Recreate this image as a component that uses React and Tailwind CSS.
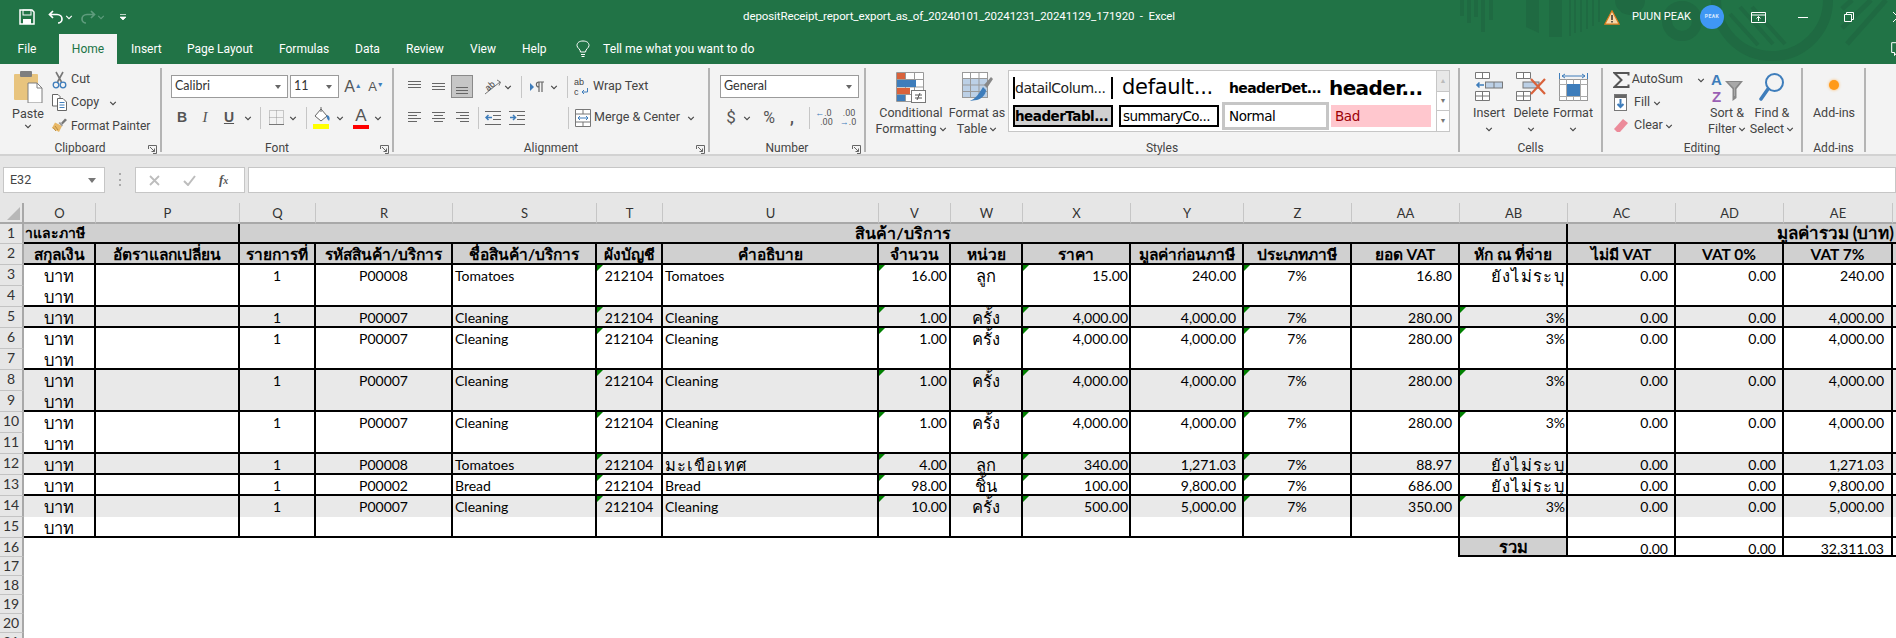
import React from "react";

const ui = "font-['Roboto',sans-serif]";
const xl = "font-['Lato','Noto_Sans',sans-serif]";

function Chev({ c = "#444", s = 8 }) {
  return (
    <svg width={s} height={s} viewBox="0 0 8 8" className="shrink-0">
      <path d="M1.2 2.8 L4 5.6 L6.8 2.8" fill="none" stroke={c} strokeWidth="1.1" />
    </svg>
  );
}
function Launcher() {
  return (
    <svg width="9" height="9" viewBox="0 0 9 9" className="absolute right-[3px] bottom-[-2px]">
      <path d="M.5 4V.5H8.5V8.5H5" fill="none" stroke="#666" />
      <path d="M2 2L6.5 6.5M6.5 3.5V6.5H3.5" fill="none" stroke="#666" />
    </svg>
  );
}
function Sep({ h = "h-[22px]", ml = "" }) {
  return <div className={`w-px bg-[#c6c6c6] ${h} ${ml}`} />;
}

/* ---------- icons ---------- */
const Lines = ({ rows }) => (
  <svg width="16" height="16" viewBox="0 0 16 16">
    {rows.map(([y, a, b], i) => (
      <rect key={i} x={a} y={y} width={b - a} height="1" fill="#666" />
    ))}
  </svg>
);
const PasteIcon = () => (
  <svg width="29" height="32" viewBox="0 0 29 32">
    <rect x="0" y="3" width="24" height="26" rx="1" fill="#e8c47e" />
    <rect x="6" y="0" width="12" height="6" rx="1" fill="#7f7f7f" />
    <path d="M14 12H23L28 17V32H14Z" fill="#fff" stroke="#7f7f7f" />
    <path d="M23 12V17H28" fill="none" stroke="#7f7f7f" />
  </svg>
);
const CutIcon = () => (
  <svg width="15" height="18" viewBox="0 0 15 18">
    <path d="M4 1L9.5 11M11 1L5.5 11" stroke="#777" strokeWidth="1.6" />
    <circle cx="4" cy="14" r="2.8" fill="none" stroke="#3e7dbb" strokeWidth="1.3" />
    <circle cx="11" cy="14" r="2.8" fill="none" stroke="#3e7dbb" strokeWidth="1.3" />
  </svg>
);
const CopyIcon = () => (
  <svg width="15" height="17" viewBox="0 0 15 17">
    <path d="M.5.5H6L8 2.5V12H.5Z" fill="#fff" stroke="#666" />
    <path d="M5.5 4.5H11L14.5 8V16.5H5.5Z" fill="#fff" stroke="#666" />
    <path d="M7.5 8.5H12.5M7.5 11H12.5M7.5 13.5H12.5" stroke="#3e7dbb" />
  </svg>
);
const PainterIcon = () => (
  <svg width="17" height="17" viewBox="0 0 17 17">
    <path d="M10 6L14 1.5L16 3L11.5 7.5Z" fill="#777" />
    <path d="M4 5.5L11 9L8 15L1 11Z" fill="#e8b867" />
    <path d="M9 5L12 8L11 9.5L7.5 6Z" fill="#999" />
    <path d="M4 9L7 13M2 10.5L5 14" stroke="#b98a3c" />
  </svg>
);
const Bucket = () => (
  <svg width="20" height="24" viewBox="0 0 20 24">
    <path d="M3 10L9 3L15 10L9 15Z" fill="#fff" stroke="#666" />
    <path d="M9 1V6" stroke="#666" />
    <path d="M15 9C18 10 18 13 17 15C15 13 14 11 15 9Z" fill="#3e7dbb" />
    <rect x="1" y="18" width="16" height="5" fill="#ffff00" />
  </svg>
);
const FontColor = () => (
  <span className="flex flex-col items-center leading-none">
    <span className="font-['Liberation_Sans',sans-serif] text-[17px] leading-[17px] text-[#555]">A</span>
    <span className="mt-[1px] block h-[4px] w-[16px] bg-[#ff0000]" />
  </span>
);
const BordersIcon = () => (
  <svg width="15" height="15" viewBox="0 0 15 15">
    <path d="M.5.5H14.5V14.5H.5ZM7.5.5V14.5M.5 7.5H14.5" fill="none" stroke="#999" strokeDasharray="1 1" />
    <path d="M0 14.5H15" stroke="#777" />
  </svg>
);
const Orient = () => (
  <svg width="18" height="18" viewBox="0 0 18 18">
    <path d="M1 16L16 4" stroke="#777" />
    <path d="M13 2L16.5 4L15 7.5" fill="none" stroke="#777" />
    <text x="1" y="11" fontSize="9" fill="#444" transform="rotate(-40 6 8)">ab</text>
  </svg>
);
const Rtl = () => (
  <svg width="16" height="14" viewBox="0 0 16 14">
    <path d="M1 3V11L5 7Z" fill="#3e7dbb" />
    <path d="M9 2H15M10 2V12M13 2V12M10 2C6.5 2 6.5 7 10 7" fill="none" stroke="#666" strokeWidth="1.2" />
  </svg>
);
const Indent = ({ flip }) => (
  <svg width="16" height="16" viewBox="0 0 16 16">
    <path d="M0 1.5H16M8 5.5H16M8 9.5H16M0 14.5H16" stroke="#666" />
    {flip ? (
      <path d="M7 7.5H1M3.5 5L1 7.5L3.5 10" fill="none" stroke="#3e7dbb" strokeWidth="1.5" />
    ) : (
      <path d="M1 7.5H6.5M4 5L6.5 7.5L4 10" fill="none" stroke="#3e7dbb" strokeWidth="1.5" />
    )}
  </svg>
);
const WrapIcon = () => (
  <svg width="16" height="20" viewBox="0 0 16 20">
    <path d="M13.5 11V15H8M10 13L8 15L10 17" fill="none" stroke="#3e7dbb" />
    <text x="0" y="8" fontSize="9" fill="#444" fontFamily="Liberation Sans">ab</text>
    <text x="0" y="18" fontSize="9" fill="#444" fontFamily="Liberation Sans">c</text>
  </svg>
);
const MergeIcon = () => (
  <svg width="16" height="18" viewBox="0 0 16 18">
    <path d="M.5.5H15.5V17.5H.5ZM.5 5H15.5M.5 13H15.5M8 .5V5M8 13V17.5" fill="#fff" stroke="#777" />
    <path d="M3 9H13M5 7L3 9L5 11M11 7L13 9L11 11" fill="none" stroke="#3e7dbb" />
  </svg>
);
const CondIcon = () => (
  <svg width="30" height="31" viewBox="0 0 30 31">
    <path d="M.5.5H27.5V29.5H.5ZM9.5.5V29.5M18.5.5V22M.5 7.5H27.5M.5 15H27.5M.5 22.5H18" fill="#fff" stroke="#999" />
    <rect x="1" y="1" width="8" height="6" fill="#d9623b" />
    <rect x="1" y="8" width="19" height="7" fill="#3e7dbb" />
    <rect x="1" y="16" width="13" height="6" fill="#d9623b" />
    <rect x="1" y="23" width="8" height="6" fill="#3e7dbb" />
    <rect x="15.5" y="18.5" width="14" height="12" fill="#fff" stroke="#777" />
    <path d="M19 23H26M19 26H26M24 21L21 28" stroke="#555" />
  </svg>
);
const TableIcon = () => (
  <svg width="31" height="31" viewBox="0 0 31 31">
    <rect x=".5" y=".5" width="25" height="25" fill="#fff" stroke="#999" />
    <rect x="1" y="6" width="24" height="19" fill="#bcd0e6" />
    <path d="M8.5.5V25.5M17 .5V25.5M.5 6.5H25.5M.5 13H25.5M.5 19.5H25.5" stroke="#999" />
    <path d="M22 13L29 5L31 7L25 16Z" fill="#888" />
    <path d="M21 15L24 18C24 23 19 27 15 28C8 29 8 29 8 29C13 27 17 22 21 15Z" fill="#3e7dbb" />
  </svg>
);
const InsertIcon = () => (
  <svg width="28" height="29" viewBox="0 0 28 29">
    <path d="M.5.5H14.5V6.5H.5ZM7.5.5V6.5" fill="#fff" stroke="#777" />
    <rect x="10.5" y="10" width="17" height="6" fill="#bcd0e6" stroke="#777" />
    <path d="M19 10V16" stroke="#777" />
    <path d="M9 13H2M4.5 10.5L2 13L4.5 15.5" fill="none" stroke="#3e7dbb" strokeWidth="1.6" />
    <path d="M.5 19.5H14.5V28.5H.5ZM7.5 19.5V28.5M.5 24H14.5" fill="#fff" stroke="#777" />
  </svg>
);
const DeleteIcon = () => (
  <svg width="31" height="29" viewBox="0 0 31 29">
    <path d="M.5.5H14.5V6.5H.5ZM7.5.5V6.5" fill="#fff" stroke="#777" />
    <rect x="7" y="10" width="16" height="6" fill="#bcd0e6" stroke="#777" />
    <path d="M.5 19.5H14.5V28.5H.5ZM7.5 19.5V28.5M.5 24H14.5" fill="#fff" stroke="#777" />
    <path d="M15 7L29 22M29 7L15 22" stroke="#d9623b" strokeWidth="2.2" />
  </svg>
);
const FormatIcon = () => (
  <svg width="29" height="31" viewBox="0 0 29 31">
    <path d="M3 4H26M3 4L6 2M3 4L6 6M26 4L23 2M26 4L23 6M.5 1V7M28.5 1V7" fill="none" stroke="#3e7dbb" />
    <rect x=".5" y="7.5" width="28" height="21" fill="#fff" stroke="#999" />
    <path d="M7.5 7.5V28.5M21.5 7.5V28.5M14.5 7.5V28.5M.5 12.5H28.5M.5 24.5H28.5" stroke="#aaa" />
    <rect x="8" y="12" width="13" height="12" fill="#3e7dbb" />
  </svg>
);
const Sigma = () => (
  <svg width="17" height="16" viewBox="0 0 17 16">
    <path d="M15.5 3.5V1H1.5L8.5 8L1.5 15H15.5V12.5" fill="none" stroke="#555" strokeWidth="2" />
  </svg>
);
const FillIcon = () => (
  <svg width="13" height="17" viewBox="0 0 13 17">
    <rect x=".5" y=".5" width="12" height="16" fill="#fff" stroke="#777" />
    <rect x="1" y="1" width="11" height="3" fill="#666" />
    <path d="M6.5 5V13M3.5 10L6.5 13L9.5 10" fill="none" stroke="#3e7dbb" strokeWidth="2" />
  </svg>
);
const Eraser = () => (
  <svg width="14" height="14" viewBox="0 0 14 14">
    <path d="M9 0L14 4L6 13H3L0 10Z" fill="#ec8b9a" />
  </svg>
);
const SortIcon = () => (
  <svg width="32" height="31" viewBox="0 0 32 31">
    <text x="0" y="13" fontSize="15" fontWeight="700" fill="#3e7dbb" fontFamily="Liberation Sans">A</text>
    <text x="1" y="30" fontSize="15" fontWeight="700" fill="#9a5fb4" fontFamily="Liberation Sans">Z</text>
    <path d="M14 9H32L25.5 17V26L21.5 29V17Z" fill="#888" />
    <path d="M17 10H29L24 16V24H23V16Z" fill="#a9a9a9" />
  </svg>
);
const FindIcon = () => (
  <svg width="26" height="30" viewBox="0 0 26 30">
    <circle cx="15.5" cy="10.5" r="8.5" fill="none" stroke="#3e7dbb" strokeWidth="2" />
    <path d="M9 17L2 27" stroke="#3e7dbb" strokeWidth="3.5" strokeLinecap="round" />
  </svg>
);
const Warn = () => (
  <svg width="16" height="15" viewBox="0 0 16 15">
    <path d="M8 .8L15.2 14.2H.8Z" fill="#f6d8a8" stroke="#d97b1c" strokeWidth="1.2" />
    <path d="M8 5V10M8 11V12.6" stroke="#222" strokeWidth="1.4" />
  </svg>
);

/* ---------- ribbon parts ---------- */
function Group({ w, label, launcher, children }) {
  return (
    <div className={`relative mt-[4px] flex h-[84px] shrink-0 flex-col border-r-2 border-[#b4b4b4] ${w}`}>
      <div className="h-[73px] shrink-0">{children}</div>
      <div className={`h-[14px] shrink-0 text-center text-[12px] leading-[14px] text-[#444] ${ui}`}>{label}</div>
      {launcher && <Launcher />}
    </div>
  );
}
function Big({ w, icon, l1, l2, chev, ml = "" }) {
  return (
    <div className={`flex shrink-0 flex-col items-center ${w} ${ml}`}>
      <div className="flex h-[34px] items-start justify-center pt-[4px]">{icon}</div>
      <div className="mt-[3px] whitespace-nowrap text-[12.5px] leading-[16px] text-[#444]">{l1}</div>
      <div className="flex h-[16px] items-center gap-[2px] whitespace-nowrap text-[12.5px] leading-[16px] text-[#444]">
        {l2}
        {chev && <Chev />}
      </div>
    </div>
  );
}
const Slot = ({ w = "w-[22px]", ml = "", on, children }) => (
  <div
    className={`flex h-[23px] shrink-0 items-center justify-center ${w} ${ml} ${on ? "border border-[#8a8a8a] bg-[#c6c6c6]" : ""}`}
  >
    {children}
  </div>
);
const Combo = ({ w, ml = "", label }) => (
  <div className={`flex h-[23px] shrink-0 items-center justify-between border border-[#9b9b9b] bg-white pl-[3px] pr-[6px] text-[12.5px] text-[#333] ${w} ${ml}`}>
    <span className={xl}>{label}</span>
    <span className="h-0 w-0 border-x-[3.5px] border-t-[4px] border-x-transparent border-t-[#666]" />
  </div>
);

function Ribbon() {
  return (
    <div className={`flex h-[92px] shrink-0 border-b-2 border-[#d2d2d2] bg-[#f3f3f3] ${ui}`}>
      <Group w="w-[162px]" label="Clipboard" launcher>
        <div className="flex">
          <div className="ml-[13px] flex w-[30px] flex-col items-center text-[12.5px] leading-[16px] text-[#444]">
            <div className="mt-[3px] h-[33px]"><PasteIcon /></div>
            <div className="mt-[2px]">Paste</div>
            <Chev />
          </div>
          <div className="ml-[7px] flex flex-col text-[12.5px] text-[#444]">
            <div className="flex h-[23px] items-center"><span className="flex w-[19px] justify-center"><CutIcon /></span><span className="ml-[2px]">Cut</span></div>
            <div className="flex h-[23px] items-center"><span className="flex w-[19px] justify-center"><CopyIcon /></span><span className="ml-[2px]">Copy</span><span className="ml-[10px]"><Chev /></span></div>
            <div className="flex h-[23px] items-center"><span className="flex w-[19px] justify-center"><PainterIcon /></span><span className="ml-[2px] text-[12px]">Format Painter</span></div>
          </div>
        </div>
      </Group>

      <Group w="w-[232px]" label="Font" launcher>
        <div className="ml-[9px] mt-[7px] flex">
          <Combo w="w-[117px]" label="Calibri" />
          <Combo w="w-[49px]" ml="ml-[2px]" label="11" />
          <Slot ml="ml-[3px]"><span className="font-['Liberation_Sans',sans-serif] text-[16px] text-[#555]">A<sup className="text-[7px] text-[#3e7dbb]">▲</sup></span></Slot>
          <Slot ml="ml-[1px]"><span className="font-['Liberation_Sans',sans-serif] text-[13px] text-[#555]">A<sup className="text-[7px] text-[#3e7dbb]">▼</sup></span></Slot>
        </div>
        <div className="ml-[9px] mt-[8px] flex items-center text-[#555]">
          <Slot><span className="font-['Liberation_Sans',sans-serif] text-[14px] font-bold">B</span></Slot>
          <Slot ml="ml-[1px]"><span className="font-['Liberation_Serif',serif] text-[15px] italic">I</span></Slot>
          <Slot ml="ml-[2px]"><span className="font-['Liberation_Sans',sans-serif] text-[14px] font-bold underline">U</span></Slot>
          <Slot w="w-[10px]" ml="ml-[3px]"><Chev /></Slot>
          <Sep ml="ml-[7px]" />
          <Slot ml="ml-[4px]"><BordersIcon /></Slot>
          <Slot w="w-[10px]" ml="ml-[1px]"><Chev /></Slot>
          <Sep ml="ml-[8px]" />
          <Slot ml="ml-[4px]"><Bucket /></Slot>
          <Slot w="w-[10px]" ml="ml-[2px]"><Chev /></Slot>
          <Slot ml="ml-[5px]"><FontColor /></Slot>
          <Slot w="w-[10px]" ml="ml-[1px]"><Chev /></Slot>
        </div>
      </Group>

      <Group w="w-[316px]" label="Alignment" launcher>
        <div className="ml-[9px] mt-[7px] flex items-center">
          <Slot><Lines rows={[[2, 2, 15], [5, 2, 15], [8, 2, 15]]} /></Slot>
          <Slot ml="ml-[2px]"><Lines rows={[[4, 2, 15], [7, 2, 15], [10, 2, 15]]} /></Slot>
          <Slot ml="ml-[2px]" on><Lines rows={[[8, 2, 14], [11, 2, 14], [14, 2, 14]]} /></Slot>
          <Slot ml="ml-[9px]"><Orient /></Slot>
          <Slot w="w-[10px]" ml="ml-[-1px]"><Chev /></Slot>
          <Sep ml="ml-[8px]" />
          <Slot ml="ml-[4px]"><Rtl /></Slot>
          <Slot w="w-[10px]" ml="ml-[1px]"><Chev /></Slot>
          <Sep ml="ml-[8px]" />
          <Slot w="w-[20px]" ml="ml-[4px]"><WrapIcon /></Slot>
          <span className="ml-[1px] whitespace-nowrap text-[12.5px] text-[#444]">Wrap Text</span>
        </div>
        <div className="ml-[9px] mt-[8px] flex items-center">
          <Slot><Lines rows={[[2, 2, 15], [5, 2, 11], [8, 2, 15], [11, 2, 11]]} /></Slot>
          <Slot ml="ml-[2px]"><Lines rows={[[2, 2, 15], [5, 4, 13], [8, 2, 15], [11, 4, 13]]} /></Slot>
          <Slot ml="ml-[2px]"><Lines rows={[[2, 2, 15], [5, 6, 15], [8, 2, 15], [11, 6, 15]]} /></Slot>
          <Sep ml="ml-[5px]" />
          <Slot ml="ml-[3px]"><Indent flip /></Slot>
          <Slot ml="ml-[2px]"><Indent /></Slot>
          <Sep ml="ml-[40px]" />
          <Slot w="w-[20px]" ml="ml-[4px]"><MergeIcon /></Slot>
          <span className="ml-[1px] w-[88px] whitespace-nowrap text-[12.5px] text-[#444]">Merge &amp; Center</span>
          <span className="ml-[5px]"><Chev /></span>
        </div>
      </Group>

      <Group w="w-[156px]" label="Number" launcher>
        <div className="ml-[10px] mt-[7px]"><Combo w="w-[139px]" label="General" /></div>
        <div className="ml-[10px] mt-[8px] flex items-center text-[#555]">
          <Slot><span className="text-[17px]">$</span></Slot>
          <Slot w="w-[10px]"><Chev /></Slot>
          <Slot ml="ml-[6px]"><span className="text-[16px]">%</span></Slot>
          <Slot ml="ml-[1px]"><span className="text-[16px] font-bold leading-[8px]">,</span></Slot>
          <Sep ml="ml-[6px]" />
          <Slot ml="ml-[3px]"><span className="flex flex-col text-[9px] leading-[9px]"><span><b className="text-[#3e7dbb]">←</b>.0</span><span className="ml-[5px]">.00</span></span></Slot>
          <Slot ml="ml-[2px]"><span className="flex flex-col text-[9px] leading-[9px]"><span className="ml-[3px]">.00</span><span><b className="text-[#3e7dbb]">→</b>.0</span></span></Slot>
        </div>
      </Group>

      <Group w="w-[594px]" label="Styles">
        <div className="flex">
          <Big w="w-[70px]" ml="ml-[10px]" icon={<CondIcon />} l1="Conditional" l2="Formatting" chev />
          <Big w="w-[60px]" ml="ml-[1px]" icon={<TableIcon />} l1="Format as" l2="Table" chev />
          <div className="ml-[1px] mt-[2px] flex h-[62px] w-[442px] border border-[#c6c6c6] bg-white">
            <div className="flex w-[428px] flex-col pl-[4px]">
              <div className="flex h-[34px] items-center text-black">
                <div className="h-[22px] w-[100px] overflow-hidden whitespace-nowrap border-x-2 border-black font-['DejaVu_Sans',sans-serif] text-[14px] leading-[22px] tracking-[-0.5px] text-[#222]">datailColum...</div>
                <div className="ml-[9px] w-[100px] font-['DejaVu_Sans',sans-serif] text-[21px] tracking-[-0.3px]">default...</div>
                <div className="ml-[7px] w-[90px] font-['DejaVu_Sans',sans-serif] text-[14px] font-bold tracking-[-0.6px]">headerDet...</div>
                <div className="ml-[10px] font-['DejaVu_Sans',sans-serif] text-[20px] font-bold tracking-[-0.6px]">header...</div>
              </div>
              <div className="flex h-[22px] items-center text-[14px]">
                <div className="h-[22px] w-[100px] overflow-hidden whitespace-nowrap border-2 border-black bg-[#d0d0d0] font-['DejaVu_Sans',sans-serif] text-[13.5px] font-bold leading-[18px] tracking-[-0.5px]">headerTabl...</div>
                <div className="ml-[6px] h-[22px] w-[100px] overflow-hidden whitespace-nowrap border-2 border-black pl-[2px] font-['DejaVu_Sans',sans-serif] text-[13.5px] leading-[18px] tracking-[-0.6px]">summaryCo...</div>
                <div className="ml-[3px] h-[28px] w-[107px] border-[3px] border-[#c6c6c6] pl-[4px] font-['DejaVu_Sans',sans-serif] text-[13.5px] leading-[22px] tracking-[-0.4px]">Normal</div>
                <div className="ml-[2px] h-[22px] w-[100px] bg-[#ffc7ce] pl-[4px] font-['DejaVu_Sans',sans-serif] text-[13.5px] leading-[22px] tracking-[-0.4px] text-[#9c0006]">Bad</div>
              </div>
            </div>
            <div className="flex w-[13px] flex-col border-l border-[#c6c6c6]">
              <div className="flex h-[21px] items-center justify-center border-b border-[#c6c6c6] bg-[#e8e8e8] text-[7px] text-[#bbb]">▲</div>
              <div className="flex h-[19px] items-center justify-center border-b border-[#c6c6c6] text-[7px] text-[#777]">▼</div>
              <div className="flex h-[20px] items-center justify-center text-[7px] text-[#777]">▼</div>
            </div>
          </div>
        </div>
      </Group>

      <Group w="w-[143px]" label="Cells">
        <div className="ml-[8px] flex">
          <Big w="w-[42px]" icon={<InsertIcon />} l1="Insert" l2="" chev />
          <Big w="w-[42px]" icon={<DeleteIcon />} l1="Delete" l2="" chev />
          <Big w="w-[42px]" icon={<FormatIcon />} l1="Format" l2="" chev />
        </div>
      </Group>

      <Group w="w-[200px]" label="Editing">
        <div className="flex">
          <div className="ml-[10px] flex w-[92px] flex-col text-[12.5px] text-[#444]">
            <div className="flex h-[23px] items-center"><span className="w-[21px]"><Sigma /></span>AutoSum<span className="ml-[14px]"><Chev /></span></div>
            <div className="flex h-[23px] items-center"><span className="w-[21px] pl-[1px]"><FillIcon /></span>Fill<span className="ml-[3px]"><Chev /></span></div>
            <div className="flex h-[23px] items-center"><span className="w-[21px] pl-[1px]"><Eraser /></span>Clear<span className="ml-[2px]"><Chev /></span></div>
          </div>
          <Big w="w-[44px]" icon={<SortIcon />} l1="Sort &" l2="Filter" chev />
          <Big w="w-[44px]" ml="ml-[1px]" icon={<FindIcon />} l1="Find &" l2="Select" chev />
        </div>
      </Group>

      <Group w="w-[63px]" label="Add-ins">
        <Big w="w-[62px]" icon={<span className="mt-[8px] block h-[10px] w-[10px] rounded-full bg-[#ff9a1a] shadow-[0_0_3px_#ffb45a]" />} l1="Add-ins" l2="" />
      </Group>
    </div>
  );
}

function TitleArea() {
  return (
    <div className={`relative h-[64px] shrink-0 overflow-hidden bg-[#217346] text-white ${ui}`}>
      <svg width="456" height="64" viewBox="0 0 456 64" className="absolute right-0 top-0" fill="#1f6a42">
        <rect x="20" y="0" width="4" height="16" /><rect x="27" y="0" width="4" height="23" /><rect x="34" y="0" width="4" height="17" />
        <rect x="41" y="0" width="4" height="32" /><rect x="49" y="0" width="4" height="20" />
        <path d="M86 0H99V33L86 27Z" /><rect x="109" y="0" width="13" height="37" />
        <rect x="129" y="0" width="2" height="36" /><rect x="134" y="0" width="2" height="33" /><rect x="140" y="0" width="2" height="32" /><rect x="146" y="0" width="2" height="29" /><rect x="152" y="0" width="2" height="26" /><rect x="158" y="0" width="2" height="22" />
        <circle cx="190" cy="0" r="15" />
        <circle cx="242" cy="21" r="15" fill="none" stroke="#1f6a42" strokeWidth="10" />
        <circle cx="332" cy="0" r="56" fill="none" stroke="#1f6a42" strokeWidth="10" />
        <path d="M290 14L318 45M300 7L333 44M312 7L345 44" stroke="#1f6a42" strokeWidth="4" fill="none" />
        <path d="M446 0L407 44M431 0L402 28M412 0L402 9" stroke="#1f6a42" strokeWidth="5" fill="none" />
      </svg>
      <div className="relative flex h-[34px] items-center">
        <svg width="16" height="16" viewBox="0 0 16 16" className="ml-[19px]">
          <path d="M1 1H13L15 3V15H1Z" fill="none" stroke="#fff" strokeWidth="1.5" />
          <rect x="4" y="1" width="8" height="5" fill="none" stroke="#fff" />
          <rect x="4" y="10" width="8" height="5" fill="#fff" />
        </svg>
        <svg width="16" height="16" viewBox="0 0 16 16" className="ml-[13px]">
          <path d="M5 2L1.5 5.5L5 9M2 5.5H9C12 5.5 14 7.5 14 10C14 12.5 12 14 10 14" fill="none" stroke="#fff" strokeWidth="1.7" />
        </svg>
        <span className="ml-[1px]"><Chev c="#fff" /></span>
        <svg width="16" height="16" viewBox="0 0 16 16" className="ml-[7px]">
          <path d="M11 2L14.5 5.5L11 9M14 5.5H7C4 5.5 2 7.5 2 10C2 12.5 4 14 6 14" fill="none" stroke="#5f9c7d" strokeWidth="1.7" />
        </svg>
        <span className="ml-[1px]"><Chev c="#5f9c7d" /></span>
        <svg width="8" height="8" viewBox="0 0 8 8" className="ml-[14px]">
          <path d="M1 1.5H7M1 4H7L4 7Z" fill="#fff" stroke="#fff" strokeWidth=".7" />
        </svg>
        <div className="ml-[616px] whitespace-nowrap text-[11.5px] tracking-[-0.1px]">depositReceipt_report_export_as_of_20240101_20241231_20241129_171920&nbsp;&nbsp;-&nbsp;&nbsp;Excel</div>
        <div className="ml-auto flex items-center">
          <Warn />
          <span className="ml-[12px] whitespace-nowrap text-[11px]">PUUN PEAK</span>
          <span className="ml-[9px] flex h-[24px] w-[24px] items-center justify-center rounded-full bg-[#3f97f4] text-[5px] font-bold tracking-[0.5px] text-white/80">PEAK</span>
          <svg width="15" height="11" viewBox="0 0 15 11" className="ml-[27px]">
            <path d="M.5.5H14.5V10.5H.5ZM.5 3H14.5M7.5 9V4.5M5.5 6.5L7.5 4.5L9.5 6.5" fill="none" stroke="#fff" />
          </svg>
          <span className="ml-[32px] block h-px w-[10px] bg-white" />
          <svg width="10" height="10" viewBox="0 0 10 10" className="ml-[36px]">
            <path d="M.5 2.5H7.5V9.5H.5ZM2.5 2.5V.5H9.5V7.5H7.5" fill="none" stroke="#fff" />
          </svg>
          <svg width="10" height="10" viewBox="0 0 10 10" className="ml-[39px] mr-[-7px]">
            <path d="M0 0L10 10M10 0L0 10" stroke="#fff" />
          </svg>
        </div>
      </div>
      <div className="relative flex h-[30px] items-center text-[12px]">
        <div className="flex w-[54px] justify-center">File</div>
        <div className="ml-[5px] flex h-[30px] w-[58px] items-center justify-center bg-[#f3f3f3] text-[#217346]">Home</div>
        <div className="ml-[14px] w-[29px] whitespace-nowrap">Insert</div>
        <div className="ml-[27px] w-[65px] whitespace-nowrap">Page Layout</div>
        <div className="ml-[27px] w-[49px] whitespace-nowrap">Formulas</div>
        <div className="ml-[27px] w-[24px] whitespace-nowrap">Data</div>
        <div className="ml-[27px] w-[37px] whitespace-nowrap">Review</div>
        <div className="ml-[27px] w-[25px] whitespace-nowrap">View</div>
        <div className="ml-[27px] w-[25px] whitespace-nowrap">Help</div>
        <svg width="14" height="18" viewBox="0 0 14 18" className="ml-[29px]">
          <path d="M4.5 12C4.5 9 1 8 1 5.5C1 2.5 3.5 1 7 1C10.5 1 13 2.5 13 5.5C13 8 9.5 9 9.5 12ZM5 14.5H9M5.5 16.5H8.5" fill="none" stroke="#fff" />
        </svg>
        <div className="ml-[13px] whitespace-nowrap text-[12.2px]">Tell me what you want to do</div>
        <svg width="14" height="15" viewBox="0 0 14 15" className="ml-auto mr-[-9px]">
          <path d="M.7.7H13.3V10.5H6L3.5 13.5V10.5H.7Z" fill="none" stroke="#fff" />
        </svg>
      </div>
    </div>
  );
}

function FormulaBar() {
  return (
    <div className={`flex h-[47px] shrink-0 items-start bg-[#e6e6e6] pt-[11px] ${ui}`}>
      <div className="ml-[3px] flex h-[26px] w-[102px] items-center justify-between border border-[#c6c6c6] bg-white pl-[6px] pr-[8px] text-[12.5px] text-[#444]">
        <span>E32</span>
        <span className="h-0 w-0 border-x-[4px] border-t-[5px] border-x-transparent border-t-[#777]" />
      </div>
      <div className="ml-[14px] mt-[6px] flex h-[13px] w-[2px] flex-col justify-between">
        <span className="h-[2px] w-[2px] bg-[#aaa]" /><span className="h-[2px] w-[2px] bg-[#aaa]" /><span className="h-[2px] w-[2px] bg-[#aaa]" />
      </div>
      <div className="ml-[14px] flex h-[26px] w-[110px] items-center border border-[#c6c6c6] bg-white">
        <svg width="11" height="11" viewBox="0 0 11 11" className="ml-[13px]"><path d="M1 1L10 10M10 1L1 10" stroke="#bdbdbd" strokeWidth="1.8" /></svg>
        <svg width="13" height="11" viewBox="0 0 13 11" className="ml-[23px]"><path d="M1 6L5 10L12 1" fill="none" stroke="#bdbdbd" strokeWidth="2" /></svg>
        <span className="ml-[23px] font-['Liberation_Serif',serif] text-[13px] font-bold italic text-[#555]">f<span className="text-[10px]">x</span></span>
      </div>
      <div className="ml-[3px] h-[26px] flex-1 border border-[#c6c6c6] bg-white" />
    </div>
  );
}

/* ---------- sheet ---------- */
const Tri = () => (
  <svg width="6" height="6" viewBox="0 0 6 6" className="absolute left-0 top-0">
    <path d="M0 0H6L0 6Z" fill="#008000" />
  </svg>
);
const COLS = ["O","P","Q","R","S","T","U","V","W","X","Y","Z","AA","AB","AC","AD","AE"];
const HEAD = ["สกุลเงิน","อัตราแลกเปลี่ยน","รายการที่","รหัสสินค้า/บริการ","ชื่อสินค้า/บริการ","ผังบัญชี","คำอธิบาย","จำนวน","หน่วย","ราคา","มูลค่าก่อนภาษี","ประเภทภาษี","ยอด VAT","หัก ณ ที่จ่าย","ไม่มี VAT","VAT 0%","VAT 7%"];

const RowHead = ({ n }) => (
  <div className="border-b border-r-2 border-b-[#c3c3c3] border-r-[#a8a8a8] bg-[#e6e6e6] text-center text-[14px] leading-[18px] text-[#333]">{n}</div>
);

const U = "ยังไม่ระบุ";
const C = ["1","P00007","Cleaning","212104","Cleaning","1.00","ครั้ง","4,000.00","4,000.00","7%","280.00","3%","0.00","0.00","4,000.00"];
const DATA = [
  { r: 3, span: 2, sh: false, v: ["1","P00008","Tomatoes","212104","Tomatoes","16.00","ลูก","15.00","240.00","7%","16.80",U,"0.00","0.00","240.00"], ab: false },
  { r: 5, span: 1, sh: true, v: C, ab: true },
  { r: 6, span: 2, sh: false, v: C, ab: true },
  { r: 8, span: 2, sh: true, v: C, ab: true },
  { r: 10, span: 2, sh: false, v: C, ab: true },
  { r: 12, span: 1, sh: true, v: ["1","P00008","Tomatoes","212104","มะเขือเทศ","4.00","ลูก","340.00","1,271.03","7%","88.97",U,"0.00","0.00","1,271.03"], ab: false },
  { r: 13, span: 1, sh: false, v: ["1","P00002","Bread","212104","Bread","98.00","ชิ้น","100.00","9,800.00","7%","686.00",U,"0.00","0.00","9,800.00"], ab: false },
];
/* alignment + padding per data column Q..AE */
const ALIGN = [
  "text-center","text-center","text-left pl-[2px]","text-center","text-left pl-[2px]",
  "text-right pr-[2px]","text-center","text-right pr-[1px]","text-right pr-[6px]","text-center",
  "text-right pr-[6px]","text-right pr-[1px]","text-right pr-[6px]","text-right pr-[6px]","text-right pr-[7px]",
];
const TRI = { 3: true, 5: true, 7: true, 9: true };

/* Thai strings in the picture sit larger than the Latin digits beside them */
function Txt({ t }) {
  if (t === U) return <span className="text-[16.5px] leading-[18px] tracking-[1.3px]">{t}</span>;
  if (t === "มะเขือเทศ") return <span className="text-[16.5px] leading-[18px] tracking-[1px]">{t}</span>;
  if (/[\u0E00-\u0E7F]/.test(t)) return <span className="text-[16.5px] leading-[18px]">{t}</span>;
  return t;
}

function Cell({ className = "", tri, children }) {
  return (
    <div className={`relative overflow-hidden whitespace-nowrap border-r-2 border-black pt-[2px] text-[14px] leading-[18px] text-black ${className}`}>
      {tri && <Tri />}
      {children}
    </div>
  );
}

function DataRow({ d }) {
  const bg = d.sh ? "bg-[#e9e9e9]" : "bg-white";
  const span = d.span === 2 ? "row-span-2" : "";
  const bb = "border-b-2";
  const items = [];
  items.push(<RowHead key="h" n={d.r} />);
  items.push(<Cell key="o" className={`text-center ${bg} ${d.span === 1 ? bb : ""}`}><Txt t="บาท" /></Cell>);
  items.push(<Cell key="p" className={`${bg} ${span} ${bb}`} />);
  d.v.forEach((t, i) => {
    const tri = TRI[i] || (i === 11 && d.ab);
    items.push(<Cell key={i} tri={tri} className={`${bg} ${span} ${bb} ${ALIGN[i]}`}><Txt t={t} /></Cell>);
  });
  items.push(<div key="af" className={`border-b-2 border-black ${bg} ${span}`} />);
  if (d.span === 2) {
    items.push(<RowHead key="h2" n={d.r + 1} />);
    items.push(<Cell key="o2" className={`text-center ${bg} ${bb}`}><Txt t="บาท" /></Cell>);
  }
  return items;
}

function Sheet() {
  const last = ["1","P00007","Cleaning","212104","Cleaning","10.00","ครั้ง","500.00","5,000.00","7%","350.00","3%","0.00","0.00","5,000.00"];
  return (
    <div className={`grid grid-cols-[24px_72px_144px_76px_137px_144px_66px_216px_72px_72px_108px_113px_108px_108px_108px_108px_108px_109px_3px] grid-rows-[21px_20px_repeat(14,21px)_repeat(4,19px)] ${xl}`}>
      {/* column headers */}
      <div className="flex items-end justify-end border-b-2 border-r-2 border-[#a8a8a8] bg-[#e6e6e6] pb-[2px] pr-[2px]">
        <span className="h-0 w-0 border-b-[13px] border-l-[13px] border-b-[#b8b8b8] border-l-transparent" />
      </div>
      {COLS.map((c) => (
        <div key={c} className="border-b-2 border-r border-b-[#a8a8a8] border-r-[#c6c6c6] bg-[#e6e6e6] pt-[1px] text-center text-[13px] leading-[18px] text-[#333]">{c}</div>
      ))}
      <div className="border-b-2 border-[#a8a8a8] bg-[#e6e6e6]" />

      {/* row 1 */}
      <RowHead n={1} />
      <div className="col-span-2 overflow-hidden whitespace-nowrap border-b-2 border-r-2 border-black bg-[#d0d0d0] pl-[1px] text-[14px] font-bold leading-[18px] text-black">าและภาษี</div>
      <div className="col-span-12 overflow-hidden whitespace-nowrap border-b-2 border-r-2 border-black bg-[#d0d0d0] text-center text-[16px] font-bold leading-[18px] text-black">สินค้า/บริการ</div>
      <div className="col-span-4 overflow-hidden whitespace-nowrap border-b-2 border-black bg-[#d0d0d0] pr-[2px] text-right text-[17px] font-bold leading-[18px] text-black">มูลค่ารวม (บาท)</div>

      {/* row 2 */}
      <RowHead n={2} />
      {HEAD.map((h) => (
        <div key={h} className="overflow-hidden whitespace-nowrap border-b-2 border-r-2 border-black bg-[#d0d0d0] pt-[1px] text-center text-[15.5px] font-bold leading-[18px] text-black">{h}</div>
      ))}
      <div className="border-b-2 border-black bg-[#d0d0d0]" />

      {DATA.map((d) => <DataRow key={d.r} d={d} />)}

      {/* row 14 */}
      <RowHead n={14} />
      <Cell className="bg-[#e9e9e9] text-center"><Txt t="บาท" /></Cell>
      <Cell className="bg-[#e9e9e9]" />
      {last.map((t, i) => (
        <Cell key={i} tri={TRI[i] || i === 11} className={`bg-[#e9e9e9] ${ALIGN[i]}`}><Txt t={t} /></Cell>
      ))}
      <div className="bg-[#e9e9e9]" />

      {/* row 15 */}
      <RowHead n={15} />
      <Cell className="border-b-2 bg-white text-center"><Txt t="บาท" /></Cell>
      {last.map((_, i) => <Cell key={i} className="border-b-2 bg-white" />)}
      <Cell className="border-b-2 bg-white" />
      <div className="border-b-2 border-black bg-white" />

      {/* row 16 */}
      <RowHead n={16} />
      <div className="col-span-13 border-r-2 border-black bg-white" />
      <div className="border-b-2 border-r-2 border-black bg-[#d0d0d0] text-center text-[16.5px] font-bold leading-[19px] text-black">รวม</div>
      <Cell className="border-b-2 bg-white pr-[6px] text-right">0.00</Cell>
      <Cell className="border-b-2 bg-white pr-[6px] text-right">0.00</Cell>
      <Cell className="border-b-2 bg-white pr-[7px] text-right">32,311.03</Cell>
      <div className="border-b-2 border-black bg-white" />

      {[17, 18, 19, 20].map((n) => (
        <React.Fragment key={n}>
          <RowHead n={n} />
          <div className="col-span-18 bg-white" />
        </React.Fragment>
      ))}
      <RowHead n={21} />
    </div>
  );
}

export default function App() {
  return (
    <div className="flex h-[638px] w-[1896px] flex-col overflow-hidden bg-white">
      <TitleArea />
      <Ribbon />
      <FormulaBar />
      <Sheet />
    </div>
  );
}
